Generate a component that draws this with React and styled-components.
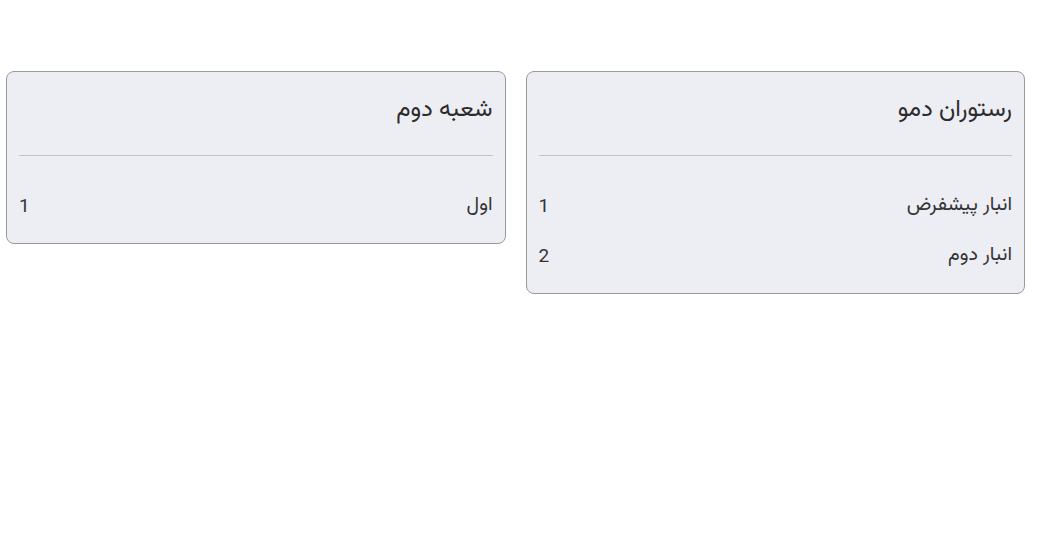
import React from "react";
import styled, { createGlobalStyle } from "styled-components";

const Global = createGlobalStyle`
  html, body { margin: 0; padding: 0; background: #ffffff; }
  body { font-family: "Vazirmatn", "DejaVu Sans", "Noto Sans", sans-serif; color: #333; }
`;

const Page = styled.div`
  direction: rtl;
  display: flex;
  align-items: flex-start;
  gap: 20px;
  padding: 71px 17px 0 6px;
`;

const Card = styled.section`
  flex: 1 1 0;
  box-sizing: border-box;
  background: #ededf4;
  border: 1px solid #9a9a9e;
  border-radius: 8px;
  padding: 12px 12px 13px;
`;

const Title = styled.h2`
  margin: 0 0 19px;
  font-size: 24px;
  font-weight: 400;
  line-height: 52px;
  color: #2b2b2b;
`;

const Divider = styled.hr`
  margin: 0;
  border: 0;
  border-top: 1px solid #c3c3ca;
`;

const List = styled.ul`
  list-style: none;
  margin: 24px 0 0;
  padding: 0;
`;

const Row = styled.li`
  display: flex;
  justify-content: space-between;
  align-items: center;
  height: 50px;
  font-size: 19.7px;
  color: #333;
`;

const Num = styled.span`
  font-family: "Roboto", "Liberation Sans", sans-serif;
  font-size: 19px;
  color: #333;
`;

const data = [
  { title: "رستوران دمو", items: ["انبار پیشفرض", "انبار دوم"] },
  { title: "شعبه دوم", items: ["اول"] },
];

export default function App() {
  return (
    <>
      <Global />
      <Page>
        {data.map((c) => (
          <Card key={c.title}>
            <Title>{c.title}</Title>
            <Divider />
            <List>
              {c.items.map((it, i) => (
                <Row key={it}>
                  <span>{it}</span>
                  <Num>{i + 1}</Num>
                </Row>
              ))}
            </List>
          </Card>
        ))}
      </Page>
    </>
  );
}
